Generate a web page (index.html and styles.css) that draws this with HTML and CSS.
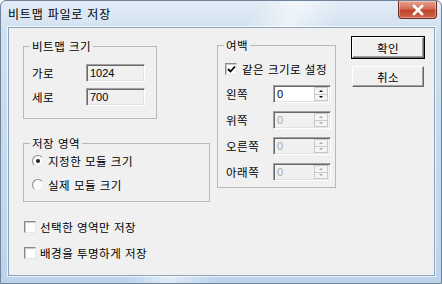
FILE: index.html
```html
<!DOCTYPE html>
<html lang="ko">
<head>
<meta charset="utf-8">
<link rel="stylesheet" href="styles.css">
</head>
<body>
<div class="window">
  <div class="titlebar">
    <span class="title">비트맵 파일로 저장</span>
    <div class="close">
      <svg width="14" height="12" viewBox="0 0 14 12"><path d="M3 2 L11 10 M11 2 L3 10" stroke="#fff" stroke-width="2.6" stroke-linecap="square"/></svg>
    </div>
  </div>
  <div class="client">
    <div class="col-left">
      <fieldset class="group g-bitmap">
        <legend>비트맵 크기</legend>
        <div class="row"><span class="lbl lbl-bmp">가로</span><span class="edit ro w-bmp">1024</span></div>
        <div class="row"><span class="lbl lbl-bmp">세로</span><span class="edit ro w-bmp">700</span></div>
      </fieldset>
      <fieldset class="group g-area">
        <legend>저장 영역</legend>
        <div class="row"><span class="radio on"></span><span>지정한 모듈 크기</span></div>
        <div class="row"><span class="radio"></span><span>실제 모듈 크기</span></div>
      </fieldset>
      <div class="checks">
        <div class="row"><span class="check"></span><span>선택한 영역만 저장</span></div>
        <div class="row"><span class="check"></span><span>배경을 투명하게 저장</span></div>
      </div>
    </div>
    <fieldset class="group g-margin">
      <legend>여백</legend>
      <div class="row row-check"><span class="check on"><svg width="9" height="9" viewBox="0 0 9 9"><path d="M1 4 L3.5 6.5 L8 1.5" fill="none" stroke="#000" stroke-width="1.8"/></svg></span><span>같은 크기로 설정</span></div>
      <div class="row"><span class="lbl lbl-m">왼쪽</span><span class="edit spin w-m"><span class="val">0</span><span class="spinner"><span class="up"></span><span class="dn"></span></span></span></div>
      <div class="row"><span class="lbl lbl-m">위쪽</span><span class="edit spin dis w-m"><span class="val">0</span><span class="spinner"><span class="up"></span><span class="dn"></span></span></span></div>
      <div class="row"><span class="lbl lbl-m">오른쪽</span><span class="edit spin dis w-m"><span class="val">0</span><span class="spinner"><span class="up"></span><span class="dn"></span></span></span></div>
      <div class="row"><span class="lbl lbl-m">아래쪽</span><span class="edit spin dis w-m"><span class="val">0</span><span class="spinner"><span class="up"></span><span class="dn"></span></span></span></div>
    </fieldset>
    <div class="buttons">
      <div class="btn default">확인</div>
      <div class="btn">취소</div>
    </div>
  </div>
</div>
</body>
</html>
```
FILE: styles.css
```css
html, body { margin: 0; padding: 0; background: #fff; }
body { font-family: "Noto Sans CJK KR", "Noto Sans", sans-serif; font-size: 11.5px; letter-spacing: 0.5px; color: #000; }

.window {
  width: 442px; height: 284px; box-sizing: border-box;
  border: 1px solid #6f8399; border-radius: 6px 6px 0 0;
  padding: 0 6px 7px 7px;
  display: flex; flex-direction: column;
  background:
    linear-gradient(115deg, rgba(255,255,255,0) 45%, rgba(255,255,255,.55) 52%, rgba(255,255,255,0) 60%),
    linear-gradient(180deg, #e2ecf6 0%, #cfe0f0 12%, #bcd4ec 100%);
}
.titlebar { height: 26px; display: flex; justify-content: space-between; align-items: flex-start; }
.title { line-height: 26px; font-size: 12px; letter-spacing: 0.8px; }
.close {
  width: 39px; height: 18px; margin-right: -2px; box-sizing: border-box;
  border: 1px solid #6b2c22; border-top: none; border-radius: 0 0 4px 4px;
  background: linear-gradient(180deg, #e8a390 0%, #d46f58 45%, #c1442c 55%, #d0644a 100%);
  display: flex; align-items: center; justify-content: center;
  box-shadow: inset 0 0 0 1px rgba(255,255,255,.35);
}
.client {
  flex: 1; display: flex; align-items: flex-start;
  background: #f0f0f0; border: 1px solid #8ea3b9;
  box-shadow: 0 0 0 1px rgba(255,255,255,.7);
  padding: 9px 0 0 14px;
}
.col-left { width: 187px; display: flex; flex-direction: column; margin-top: 2px; }
.group {
  margin: 0; box-sizing: border-box;
  border: 1px solid #b8b8b8; border-radius: 0;
  display: flex; flex-direction: column;
}
.group legend { padding: 0 2px; margin-left: -2px; line-height: 14px; }
.g-bitmap { width: 134px; padding: 11px 8px 12px 8px; gap: 6px; }
.g-area { width: 187px; margin-top: 17px; padding: 2px 8px 7px 8px; gap: 6px; }
.g-margin { width: 119px; margin-top: 1px; margin-left: 7px; padding: 8px 4px 6px 8px; gap: 8px; }
.row { display: flex; align-items: center; height: 18px; white-space: nowrap; }
.row-check { margin-bottom: -1px; }
.lbl-bmp { width: 54px; }
.lbl-m { width: 47px; }

.edit {
  height: 18px; box-sizing: border-box;
  border: 1px solid; border-color: #a0a0a0 #fff #fff #a0a0a0;
  box-shadow: inset 1px 1px 0 #696969, inset -1px -1px 0 #e3e3e3;
  background: #fff; display: flex; align-items: center; padding-left: 3px;
  font-family: "Liberation Sans", Arial, sans-serif; font-size: 11px; letter-spacing: 0;
}
.edit.ro { background: #f0f0f0; }
.w-bmp { width: 59px; }
.w-m { width: 58px; padding-right: 2px; justify-content: space-between; }
.edit.dis { background: #f0f0f0; color: #a8a8a8; }
.spinner {
  width: 14px; height: 14px; display: flex; flex-direction: column;
  border: 1px solid #c9c9c9; box-sizing: border-box; background: #f4f4f4;
}
.spinner .up, .spinner .dn { flex: 1; display: flex; align-items: center; justify-content: center; }
.spinner .up { border-bottom: 1px solid #c9c9c9; }
.spinner .up::after { content: ""; border: 2px solid transparent; border-bottom: 2px solid #000; border-top: 0; }
.spinner .dn::after { content: ""; border: 2px solid transparent; border-top: 2px solid #000; border-bottom: 0; }
.dis .spinner .up::after { border-bottom-color: #a8a8a8; }
.dis .spinner .dn::after { border-top-color: #a8a8a8; }

.radio {
  width: 12px; height: 12px; box-sizing: border-box; border-radius: 50%;
  border: 1px solid; border-color: #8a8a8a #e8e8e8 #e8e8e8 #8a8a8a;
  background: #fbfbfb; margin-right: 4px; display: flex; align-items: center; justify-content: center;
}
.radio.on::after { content: ""; width: 4px; height: 4px; border-radius: 50%; background: #222; }

.checks { display: flex; flex-direction: column; gap: 8px; margin-top: 16px; margin-left: 1px; }
.check {
  width: 12px; height: 12px; box-sizing: border-box;
  border: 1px solid; border-color: #8a8a8a #e6e6e6 #e6e6e6 #8a8a8a;
  box-shadow: inset 1px 1px 0 #c8c8c8;
  background: #fdfdfd; margin-right: 4px; display: flex; align-items: center; justify-content: center;
}
.row-check .check { margin-left: -1px; margin-right: 5px; }

.buttons { display: flex; flex-direction: column; gap: 8px; margin-left: 16px; margin-top: 0; }
.btn {
  width: 72px; height: 21px; box-sizing: border-box;
  display: flex; align-items: center; justify-content: center;
  border: 1px solid; border-color: #fff #696969 #696969 #fff;
  box-shadow: inset -1px -1px 0 #a0a0a0;
  background: #f0f0f0;
}
.btn.default { outline: 1px solid #000; outline-offset: 0; }
```
